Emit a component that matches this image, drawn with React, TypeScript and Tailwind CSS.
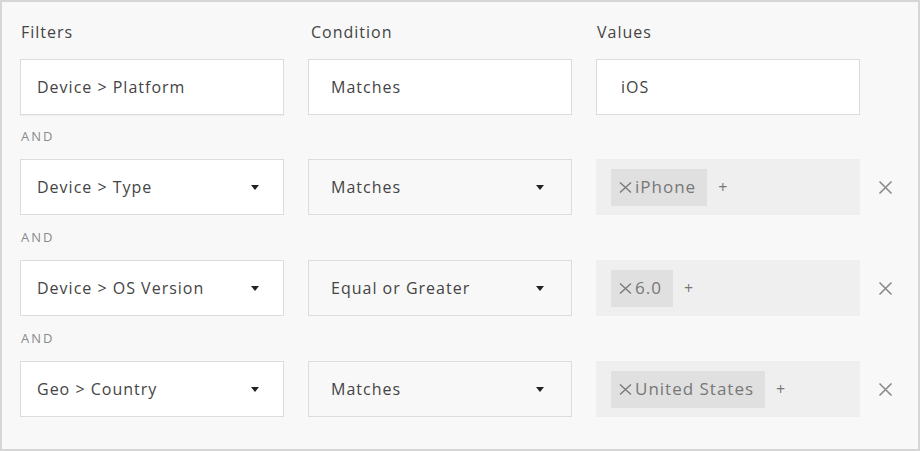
import React from 'react';

type Row = {
  filter: string;
  condition: string;
  values: string[];
  editable?: boolean;
};

const rows: Row[] = [
  { filter: 'Device > Platform', condition: 'Matches', values: ['iOS'] },
  { filter: 'Device > Type', condition: 'Matches', values: ['iPhone'], editable: true },
  { filter: 'Device > OS Version', condition: 'Equal or Greater', values: ['6.0'], editable: true },
  { filter: 'Geo > Country', condition: 'Matches', values: ['United States'], editable: true },
];

const Caret = () => (
  <svg width="8" height="5" viewBox="0 0 8 5" className="shrink-0">
    <path d="M0 0h8L4 5z" fill="#222" />
  </svg>
);

const RemoveIcon = () => (
  <svg width="15" height="15" viewBox="0 0 15 15">
    <path d="M1.5 1.5l12 12M13.5 1.5l-12 12" stroke="#8a8a8a" strokeWidth="1.6" />
  </svg>
);

const ChipX = () => (
  <svg width="13" height="11" viewBox="0 0 13 11" className="mr-[3px] shrink-0">
    <path d="M1 0.5l11 10M12 0.5l-11 10" stroke="#7a7a7a" strokeWidth="1.4" />
  </svg>
);

const FilterRow = ({ row }: { row: Row }) => {
  if (!row.editable) {
    return (
      <div className="grid grid-cols-[264px_264px_264px] gap-x-6">
        <div className="h-14 bg-white border border-[#dcdcdc] shadow-[0_1px_1px_rgba(0,0,0,0.04)] flex items-center pl-4">
          {row.filter}
        </div>
        <div className="h-14 bg-white border border-[#dcdcdc] flex items-center pl-[22px]">{row.condition}</div>
        <div className="h-14 bg-white border border-[#dcdcdc] flex items-center pl-6">{row.values[0]}</div>
      </div>
    );
  }
  return (
    <div className="grid grid-cols-[264px_264px_264px_1fr] gap-x-6">
      <div className="h-14 bg-white border border-[#dcdcdc] flex items-center justify-between pl-4 pr-6">
        <span>{row.filter}</span>
        <Caret />
      </div>
      <div className="h-14 bg-[#f8f8f8] border border-[#dcdcdc] flex items-center justify-between pl-[22px] pr-[27px]">
        <span>{row.condition}</span>
        <Caret />
      </div>
      <div className="h-14 bg-[#efefef] flex items-center pl-[15px] gap-[11px]">
        {row.values.map((v) => (
          <span key={v} className="h-[37px] bg-[#e0e0e0] text-[#777] text-[17px] flex items-center pl-[8px] pr-[11px]">
            <ChipX />
            {v}
          </span>
        ))}
        <span className="text-[#777] text-[16px]">+</span>
      </div>
      <div className="flex items-center -ml-[6px]">
        <RemoveIcon />
      </div>
    </div>
  );
};

export default function App() {
  return (
    <div
      className="w-[920px] h-[451px] bg-[#f8f8f8] border-2 border-[#d6d6d6] pl-[18px] pt-[20px] text-[#444] text-[16px] tracking-[1px]"
      style={{ fontFamily: '"Open Sans", "Liberation Sans", sans-serif' }}
    >
      <div className="grid grid-cols-[264px_264px_264px] gap-x-6 text-[16px] leading-5 mb-[17px] pl-[1px] tracking-[1px]">
        <div>Filters</div>
        <div className="pl-[2px]">Condition</div>
        <div>Values</div>
      </div>
      {rows.map((row, i) => (
        <React.Fragment key={row.filter}>
          {i > 0 && (
            <div
              className={`${i === 1 ? 'h-[44px]' : 'h-[45px]'} flex items-center text-[13px] tracking-[2px] text-[#8a8a8a] pl-[1px]`}
            >
              AND
            </div>
          )}
          <FilterRow row={row} />
        </React.Fragment>
      ))}
    </div>
  );
}
